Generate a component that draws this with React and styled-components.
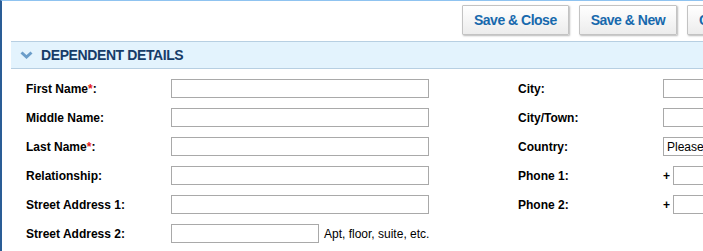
import React from "react";
import styled, { createGlobalStyle } from "styled-components";

const Global = createGlobalStyle`
  html, body { margin: 0; padding: 0; background: #fff; overflow: hidden; }
  body { font-family: "Liberation Sans", Arial, sans-serif; }
`;

const Page = styled.div`
  width: 780px;
  min-height: 251px;
  border-top: 1px solid #8fc3f0;
  border-left: 2px solid #2a5d96;
  box-sizing: border-box;
`;

const Toolbar = styled.div`
  display: flex;
  justify-content: flex-end;
  gap: 10px;
  padding: 4px 26px 6px 0;
`;

const Button = styled.button`
  height: 30px;
  padding: 0 11px;
  border: 1px solid #c3c3c3;
  border-radius: 1px;
  background: linear-gradient(#ffffff, #ececec);
  box-shadow: 1px 1px 2px rgba(0, 0, 0, 0.28);
  color: #1769ad;
  font-family: "Liberation Sans", Arial, sans-serif;
  font-weight: bold;
  font-size: 14px;
  letter-spacing: -0.5px;
  cursor: pointer;
`;

const SectionHeader = styled.div`
  margin-left: 9px;
  height: 26px;
  display: flex;
  align-items: center;
  gap: 8px;
  padding-left: 9px;
  background: #e3f3fd;
  border-top: 1px solid #b7cfe2;
  border-bottom: 1px solid #b7cfe2;
`;

const Title = styled.span`
  color: #163c68;
  font-weight: bold;
  font-size: 14px;
  letter-spacing: -0.4px;
`;

const Form = styled.div`
  display: grid;
  grid-template-columns: 145px 347px 145px 1fr;
  grid-auto-rows: 29px;
  padding: 5px 0 0 24px;
`;

const Label = styled.label`
  display: flex;
  align-items: center;
  font-size: 12px;
  font-weight: bold;
  color: #000;
  white-space: nowrap;
`;

const Req = styled.span`
  color: #e41b1b;
`;

const Field = styled.div`
  display: flex;
  align-items: center;
  gap: ${(p) => (p.$gap ? p.$gap : 0)}px;
  white-space: nowrap;
`;

const Input = styled.input`
  box-sizing: border-box;
  width: ${(p) => p.$w || 258}px;
  height: 19px;
  margin: 0;
  border: 1px solid #a9a9a9;
  padding: 0 3px;
  font-size: 12px;
  font-family: "Liberation Sans", Arial, sans-serif;
  flex: none;
`;

const Select = styled.select`
  box-sizing: border-box;
  width: 200px;
  height: 19px;
  margin: 0;
  border: 1px solid #a9a9a9;
  border-radius: 0;
  padding: 0 3px;
  appearance: none;
  background: #fff;
  color: #000;
  font-size: 12px;
  font-family: "Liberation Sans", Arial, sans-serif;
`;

const Hint = styled.span`
  font-size: 12px;
  color: #000;
`;

const Plus = styled.span`
  font-size: 12px;
  font-weight: bold;
  width: 10px;
`;

const Chevron = () => (
  <svg width="13" height="8" viewBox="0 0 13 8">
    <polyline
      points="1.5,1.5 6.5,6 11.5,1.5"
      fill="none"
      stroke="#6b9dc9"
      strokeWidth="3"
    />
  </svg>
);

export default function App() {
  return (
    <>
      <Global />
      <Page>
        <Toolbar>
          <Button>Save &amp; Close</Button>
          <Button>Save &amp; New</Button>
          <Button>Cancel</Button>
        </Toolbar>
        <SectionHeader>
          <Chevron />
          <Title>DEPENDENT DETAILS</Title>
        </SectionHeader>
        <Form>
          <Label>First Name<Req>*</Req>:</Label>
          <Field><Input /></Field>
          <Label>City:</Label>
          <Field><Input /></Field>

          <Label>Middle Name:</Label>
          <Field><Input /></Field>
          <Label>City/Town:</Label>
          <Field><Input /></Field>

          <Label>Last Name<Req>*</Req>:</Label>
          <Field><Input /></Field>
          <Label>Country:</Label>
          <Field>
            <Select defaultValue="">
              <option value="">Please Select</option>
            </Select>
          </Field>

          <Label>Relationship:</Label>
          <Field><Input /></Field>
          <Label>Phone 1:</Label>
          <Field><Plus>+</Plus><Input $w={60} /></Field>

          <Label>Street Address 1:</Label>
          <Field><Input /></Field>
          <Label>Phone 2:</Label>
          <Field><Plus>+</Plus><Input $w={60} /></Field>

          <Label>Street Address 2:</Label>
          <Field $gap={5}><Input $w={148} /><Hint>Apt, floor, suite, etc.</Hint></Field>
        </Form>
      </Page>
    </>
  );
}
